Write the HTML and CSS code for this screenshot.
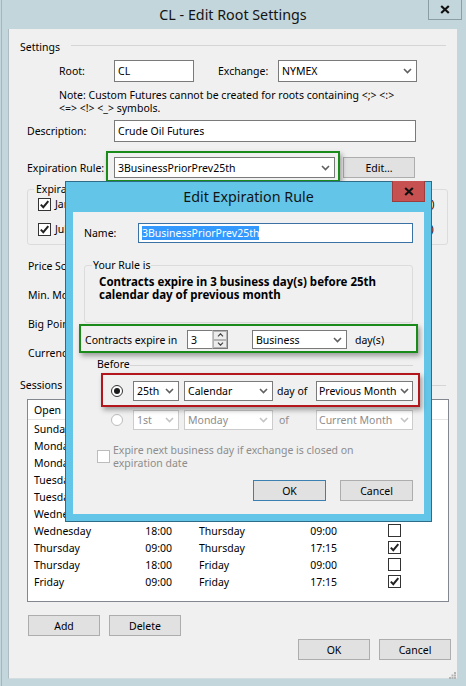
FILE: index.html
```html
<!DOCTYPE html>
<html>
<head>
<meta charset="utf-8">
<title>CL - Edit Root Settings</title>
<link rel="stylesheet" href="styles.css">
</head>
<body>
<div class="window">
  <div class="titlebar">
    <div></div>
    <div class="title">CL - Edit Root Settings</div>
    <div class="win-close"><svg width="10" height="9" viewBox="0 0 10 9"><path d="M1.2 1L8.8 8M8.8 1L1.2 8" stroke="#111" stroke-width="2.2"/></svg></div>
  </div>
  <div class="client">
    <div class="sec-head settings-head"><span>Settings</span><i class="rule"></i></div>
    <div class="row root-row">
      <span class="lbl lbl-root">Root:</span>
      <div class="field f-root">CL</div>
      <span class="lbl lbl-exch">Exchange:</span>
      <div class="field f-exch"><span>NYMEX</span><svg class="chev" width="9" height="6" viewBox="0 0 9 6"><path d="M1 1l3.5 3.5L8 1" fill="none" stroke="#606060" stroke-width="1.6"/></svg></div>
    </div>
    <p class="note">Note: Custom Futures cannot be created for roots containing &lt;;&gt; &lt;:&gt;<br>&lt;=&gt; &lt;!&gt; &lt;_&gt; symbols.</p>
    <div class="row desc-row">
      <span class="lbl lbl-wide">Description:</span>
      <div class="field f-desc">Crude Oil Futures</div>
    </div>
    <div class="row exp-row">
      <span class="lbl lbl-wide">Expiration Rule:</span>
      <div class="field f-rule"><span>3BusinessPriorPrev25th</span><svg class="chev" width="9" height="6" viewBox="0 0 9 6"><path d="M1 1l3.5 3.5L8 1" fill="none" stroke="#606060" stroke-width="1.6"/></svg></div>
      <div class="btn edit-btn">Edit...</div>
    </div>
    <div class="group months">
      <span class="group-label">Expiration Months</span>
      <div class="month-grid">
        <div class="cbx"><span class="box on"><svg width="11" height="11" viewBox="0 0 11 11"><path d="M1.8 5.6L4.3 8.2L9.3 2.2" fill="none" stroke="#222" stroke-width="2"/></svg></span><span>Jan (F)</span></div>
        <div class="cbx"><span class="box on"><svg width="11" height="11" viewBox="0 0 11 11"><path d="M1.8 5.6L4.3 8.2L9.3 2.2" fill="none" stroke="#222" stroke-width="2"/></svg></span><span>Feb (G)</span></div>
        <div class="cbx"><span class="box on"><svg width="11" height="11" viewBox="0 0 11 11"><path d="M1.8 5.6L4.3 8.2L9.3 2.2" fill="none" stroke="#222" stroke-width="2"/></svg></span><span>Mar (H)</span></div>
        <div class="cbx"><span class="box on"><svg width="11" height="11" viewBox="0 0 11 11"><path d="M1.8 5.6L4.3 8.2L9.3 2.2" fill="none" stroke="#222" stroke-width="2"/></svg></span><span>Apr (J)</span></div>
        <div class="cbx"><span class="box on"><svg width="11" height="11" viewBox="0 0 11 11"><path d="M1.8 5.6L4.3 8.2L9.3 2.2" fill="none" stroke="#222" stroke-width="2"/></svg></span><span>May (K)</span></div>
        <div class="cbx"><span class="box on"><svg width="11" height="11" viewBox="0 0 11 11"><path d="M1.8 5.6L4.3 8.2L9.3 2.2" fill="none" stroke="#222" stroke-width="2"/></svg></span><span>Jun (M)</span></div>
        <div class="cbx"><span class="box on"><svg width="11" height="11" viewBox="0 0 11 11"><path d="M1.8 5.6L4.3 8.2L9.3 2.2" fill="none" stroke="#222" stroke-width="2"/></svg></span><span>Jul (N)</span></div>
        <div class="cbx"><span class="box on"><svg width="11" height="11" viewBox="0 0 11 11"><path d="M1.8 5.6L4.3 8.2L9.3 2.2" fill="none" stroke="#222" stroke-width="2"/></svg></span><span>Aug (Q)</span></div>
        <div class="cbx"><span class="box on"><svg width="11" height="11" viewBox="0 0 11 11"><path d="M1.8 5.6L4.3 8.2L9.3 2.2" fill="none" stroke="#222" stroke-width="2"/></svg></span><span>Sep (U)</span></div>
        <div class="cbx"><span class="box on"><svg width="11" height="11" viewBox="0 0 11 11"><path d="M1.8 5.6L4.3 8.2L9.3 2.2" fill="none" stroke="#222" stroke-width="2"/></svg></span><span>Oct (V)</span></div>
        <div class="cbx"><span class="box on"><svg width="11" height="11" viewBox="0 0 11 11"><path d="M1.8 5.6L4.3 8.2L9.3 2.2" fill="none" stroke="#222" stroke-width="2"/></svg></span><span>Nov (X)</span></div>
        <div class="cbx"><span class="box on"><svg width="11" height="11" viewBox="0 0 11 11"><path d="M1.8 5.6L4.3 8.2L9.3 2.2" fill="none" stroke="#222" stroke-width="2"/></svg></span><span>Dec (Z)</span></div>
      </div>
    </div>
    <div class="prop">Price Scale:</div>
    <div class="prop">Min. Move:</div>
    <div class="prop">Big Point Value:</div>
    <div class="prop">Currency:</div>
    <div class="sec-head sessions-head"><span>Sessions</span><i class="rule"></i></div>
    <div class="list">
      <div class="list-head"><span>Open</span><span class="t">Time</span><span class="d2">Close</span><span class="t">Time</span><span class="cbcell">Sett.</span></div>
      <div class="list-row"><span>Sunday</span><span class="t">18:00</span><span class="d2">Monday</span><span class="t">09:00</span><span class="cbcell"><span class="box"></span></span></div>
      <div class="list-row"><span>Monday</span><span class="t">09:00</span><span class="d2">Monday</span><span class="t">17:15</span><span class="cbcell"><span class="box on"><svg width="11" height="11" viewBox="0 0 11 11"><path d="M1.8 5.6L4.3 8.2L9.3 2.2" fill="none" stroke="#222" stroke-width="2"/></svg></span></span></div>
      <div class="list-row"><span>Monday</span><span class="t">18:00</span><span class="d2">Tuesday</span><span class="t">09:00</span><span class="cbcell"><span class="box"></span></span></div>
      <div class="list-row"><span>Tuesday</span><span class="t">09:00</span><span class="d2">Tuesday</span><span class="t">17:15</span><span class="cbcell"><span class="box on"><svg width="11" height="11" viewBox="0 0 11 11"><path d="M1.8 5.6L4.3 8.2L9.3 2.2" fill="none" stroke="#222" stroke-width="2"/></svg></span></span></div>
      <div class="list-row"><span>Tuesday</span><span class="t">18:00</span><span class="d2">Wednesday</span><span class="t">09:00</span><span class="cbcell"><span class="box"></span></span></div>
      <div class="list-row"><span>Wednesday</span><span class="t">09:00</span><span class="d2">Wednesday</span><span class="t">17:15</span><span class="cbcell"><span class="box on"><svg width="11" height="11" viewBox="0 0 11 11"><path d="M1.8 5.6L4.3 8.2L9.3 2.2" fill="none" stroke="#222" stroke-width="2"/></svg></span></span></div>
      <div class="list-row"><span>Wednesday</span><span class="t">18:00</span><span class="d2">Thursday</span><span class="t">09:00</span><span class="cbcell"><span class="box"></span></span></div>
      <div class="list-row"><span>Thursday</span><span class="t">09:00</span><span class="d2">Thursday</span><span class="t">17:15</span><span class="cbcell"><span class="box on"><svg width="11" height="11" viewBox="0 0 11 11"><path d="M1.8 5.6L4.3 8.2L9.3 2.2" fill="none" stroke="#222" stroke-width="2"/></svg></span></span></div>
      <div class="list-row"><span>Thursday</span><span class="t">18:00</span><span class="d2">Friday</span><span class="t">09:00</span><span class="cbcell"><span class="box"></span></span></div>
      <div class="list-row"><span>Friday</span><span class="t">09:00</span><span class="d2">Friday</span><span class="t">17:15</span><span class="cbcell"><span class="box on"><svg width="11" height="11" viewBox="0 0 11 11"><path d="M1.8 5.6L4.3 8.2L9.3 2.2" fill="none" stroke="#222" stroke-width="2"/></svg></span></span></div>
    </div>
    <div class="btn-row">
      <div class="btn">Add</div>
      <div class="btn">Delete</div>
    </div>
    <div class="btn-row-right">
      <div class="btn">OK</div>
      <div class="btn">Cancel</div>
    </div>
    <svg class="grip" width="7" height="7" viewBox="0 0 7 7"><rect x="5" y="0" width="2" height="2" fill="#b4b4b4"/><rect x="2.5" y="2.5" width="2" height="2" fill="#b4b4b4"/><rect x="5" y="2.5" width="2" height="2" fill="#b4b4b4"/><rect x="0" y="5" width="2" height="2" fill="#b4b4b4"/><rect x="2.5" y="5" width="2" height="2" fill="#b4b4b4"/><rect x="5" y="5" width="2" height="2" fill="#b4b4b4"/></svg>
  </div>
</div>

<div class="mark mark-green1"></div>

<div class="dialog">
  <div class="dlg-title">
    <div></div>
    <div class="title">Edit Expiration Rule</div>
    <div class="dlg-close"><svg width="10" height="9" viewBox="0 0 10 9"><path d="M1.2 1L8.8 8M8.8 1L1.2 8" stroke="#111" stroke-width="2.2"/></svg></div>
  </div>
  <div class="dlg-body">
    <div class="row name-row">
      <span class="lbl lbl-name">Name:</span>
      <div class="field f-name"><span class="sel">3BusinessPriorPrev25th</span></div>
    </div>
    <div class="group rule-group">
      <span class="group-label">Your Rule is</span>
      <p class="rule-text">Contracts expire in 3 business day(s) before 25th<br>calendar day of previous month</p>
    </div>
    <div class="row contracts-row">
      <span class="lbl lbl-contracts">Contracts expire in</span>
      <div class="spin">
        <div class="spin-in">3</div>
        <div class="spin-btns">
          <span class="spin-b"><svg width="7" height="4" viewBox="0 0 7 4"><path d="M1 3.3L3.5 0.8L6 3.3" fill="none" stroke="#444" stroke-width="1.2"/></svg></span>
          <span class="spin-b"><svg width="7" height="4" viewBox="0 0 7 4"><path d="M1 0.7L3.5 3.2L6 0.7" fill="none" stroke="#444" stroke-width="1.2"/></svg></span>
        </div>
      </div>
      <div class="field f-biz"><span>Business</span><svg class="chev" width="9" height="6" viewBox="0 0 9 6"><path d="M1 1l3.5 3.5L8 1" fill="none" stroke="#606060" stroke-width="1.6"/></svg></div>
      <span class="days">day(s)</span>
    </div>
    <div class="before-head"><span>Before</span><i class="rule"></i></div>
    <div class="opt-row opt1">
      <span class="radio on"></span>
      <div class="field f-d1"><span>25th</span><svg class="chev" width="9" height="6" viewBox="0 0 9 6"><path d="M1 1l3.5 3.5L8 1" fill="none" stroke="#606060" stroke-width="1.6"/></svg></div>
      <div class="field f-d2"><span>Calendar</span><svg class="chev" width="9" height="6" viewBox="0 0 9 6"><path d="M1 1l3.5 3.5L8 1" fill="none" stroke="#606060" stroke-width="1.6"/></svg></div>
      <span class="ofword">day of</span>
      <div class="field f-d3"><span>Previous Month</span><svg class="chev" width="9" height="6" viewBox="0 0 9 6"><path d="M1 1l3.5 3.5L8 1" fill="none" stroke="#606060" stroke-width="1.6"/></svg></div>
    </div>
    <div class="opt-row opt2 disabled">
      <span class="radio"></span>
      <div class="field f-d1"><span>1st</span><svg class="chev" width="9" height="6" viewBox="0 0 9 6"><path d="M1 1l3.5 3.5L8 1" fill="none" stroke="#c4c4c4" stroke-width="1.6"/></svg></div>
      <div class="field f-d2"><span>Monday</span><svg class="chev" width="9" height="6" viewBox="0 0 9 6"><path d="M1 1l3.5 3.5L8 1" fill="none" stroke="#c4c4c4" stroke-width="1.6"/></svg></div>
      <span class="ofword of2">of</span>
      <div class="field f-d3"><span>Current Month</span><svg class="chev" width="9" height="6" viewBox="0 0 9 6"><path d="M1 1l3.5 3.5L8 1" fill="none" stroke="#c4c4c4" stroke-width="1.6"/></svg></div>
    </div>
    <div class="expire-row disabled">
      <span class="box"></span>
      <p class="expire-text">Expire next business day if exchange is closed on<br>expiration date</p>
    </div>
    <div class="dlg-btns">
      <div class="btn default">OK</div>
      <div class="btn">Cancel</div>
    </div>
  </div>
</div>

<div class="mark mark-green2"></div>
<div class="mark mark-red"></div>
</body>
</html>
```

FILE: styles.css
```css
* { box-sizing: border-box; margin: 0; padding: 0; }
html, body { width: 466px; height: 686px; overflow: hidden; }
body {
  position: relative;
  background: linear-gradient(to right, #c3d6dc 1px, #a6b7bc 1px, #a6b7bc 2px, #c3d6dc 2px);
  font-family: "Noto Sans", "Open Sans", sans-serif;
  font-size: 10.5px;
  line-height: 14px;
  color: #000;
}
.window { width: 466px; height: 686px; }
.titlebar { height: 29px; display: grid; grid-template-columns: 1fr auto 1fr; }
.title { font-size: 14.3px; line-height: 29px; color: #141414; white-space: nowrap; }
.win-close {
  justify-self: end; width: 34px; height: 20px; margin-right: 4px;
  border: 1px solid #8c9ea4; border-top: none;
  display: flex; align-items: center; justify-content: center;
}
.client {
  margin: 0 9px 0 8px; width: 449px; height: 650px; background: #f0f0f0; display: flow-root;
  border-left: 1px solid #aebcc1; border-bottom: 1px solid #d2dde1;
}
.sec-head { display: flex; height: 14px; padding: 0 11px; }
.sec-head .rule { flex: 1; height: 1px; background: #d5d5d5; margin: 5px 0 0 11px; }
.settings-head { margin-top: 11px; }
.sessions-head { margin-top: 17px; }
.sessions-head .rule { margin-top: 7px; }

.row { display: flex; align-items: center; }
.lbl { flex: none; white-space: nowrap; }
.field {
  flex: none; height: 22px; border: 1px solid #7a7a7a; background: #fff;
  padding: 0 4px 0 3px; display: flex; align-items: center; justify-content: space-between;
  white-space: nowrap; overflow: hidden;
}
.chev { flex: none; }
.root-row { height: 22px; margin-top: 6px; padding-left: 50px; }
.lbl-root { width: 55px; }
.f-root { width: 80px; }
.lbl-exch { width: 60px; margin-left: 24px; }
.f-exch { width: 139px; }
.note { margin-top: 7px; padding-left: 50px; line-height: 13px; }
.desc-row { height: 22px; margin-top: 5px; padding-left: 18px; }
.lbl-wide { width: 87px; }
.f-desc { width: 302px; }
.exp-row { height: 21px; margin-top: 15px; padding-left: 18px; }
.f-rule { width: 221px; height: 21px; }
.btn {
  flex: none; width: 72px; height: 21px; background: #e1e1e1; border: 1px solid #adadad;
  display: flex; align-items: center; justify-content: center;
}
.edit-btn { margin-left: 8px; }

.group { border: 1px solid #dcdcdc; border-radius: 3px; }
.group-label {
  display: block; width: fit-content; margin: -8px 0 0 6px; padding: 0 2px;
  background: #f0f0f0; line-height: 14px;
}
.months { margin: 11px 0 0 18px; width: 421px; height: 56px; }
.month-grid {
  display: grid; grid-template-columns: repeat(6, 69px); grid-auto-rows: 16px;
  row-gap: 9px; padding-left: 10px;
}
.cbx { display: flex; align-items: center; gap: 4px; white-space: nowrap; }
.box {
  flex: none; width: 13px; height: 13px; border: 1px solid #333; background: #fff;
  display: flex; align-items: center; justify-content: center;
}
.prop { height: 16px; line-height: 16px; padding-left: 19px; margin-top: 13px; }

.list {
  margin: 7px 0 0 18px; width: 422px; height: 203px;
  border: 1px solid #828790; background: #fff;
}
.list-head, .list-row {
  display: grid; grid-template-columns: 100px 38px 127px 38px 64px;
  padding-left: 6px; align-items: center; white-space: nowrap;
}
.list-head { height: 20px; border-bottom: 1px solid #e5e5e5; }
.list-row { height: 17px; }
.t { text-align: right; }
.d2 { padding-left: 27px; }
.cbcell { padding-left: 51px; display: flex; }
.btn-row { display: flex; gap: 9px; margin-top: 13px; padding-left: 19px; }
.btn-row-right { display: flex; gap: 9px; margin-top: 3px; justify-content: flex-end; padding-right: 6px; }
.grip { display: block; margin: 12px 1px 0 auto; }

/* dialog */
.dialog {
  position: absolute; left: 65px; top: 181px; width: 367px; height: 341px;
  background: #63c6e9; border: 1px solid #2f6c88; z-index: 2;
  display: flex; flex-direction: column;
}
.dlg-title { flex: none; height: 30px; display: grid; grid-template-columns: 1fr auto 1fr; }
.dlg-title .title { line-height: 30px; }
.dlg-close {
  justify-self: end; margin: -1px 6px 0 0; width: 33px; height: 21px;
  background: #c75050; border: 1px solid #9c3c3c; border-top: none;
  display: flex; align-items: center; justify-content: center;
}
.dlg-body { flex: 1; margin: 0 7px 7px 7px; background: #f0f0f0; display: flow-root; }
.name-row { height: 20px; margin-top: 11px; padding-left: 11px; }
.lbl-name { width: 54px; }
.f-name { width: 275px; height: 20px; border-color: #3a72a6; }
.sel { background: #3399ff; color: #fff; line-height: 14px; }
.rule-group { margin: 22px 0 0 11px; width: 329px; height: 58px; }
.rule-group .group-label { margin-left: 7px; padding: 0 1px; }
.rule-text { margin-top: 4px; padding-left: 14px; font-size: 11.5px; font-weight: 700; line-height: 12.5px; white-space: nowrap; }
.contracts-row { height: 19px; margin-top: 7px; padding-left: 12px; }
.lbl-contracts { width: 102px; }
.spin { flex: none; display: flex; height: 19px; }
.spin-in { width: 25px; height: 19px; border: 1px solid #7a7a7a; border-right: none; background: #fff; padding-left: 3px; display: flex; align-items: center; }
.spin-btns { width: 16px; height: 19px; display: flex; flex-direction: column; border: 1px solid #7a7a7a; border-left: 1px solid #c8c8c8; background: #fff; }
.spin-b { flex: 1; display: flex; align-items: center; justify-content: center; border: 1px solid #b4b4b4; background: #ececec; margin: 0; }
.f-biz { width: 95px; height: 19px; margin-left: 24px; }
.days { margin-left: 8px; }
.before-head { display: flex; width: 340px; height: 12px; margin-top: 9px; padding-left: 24px; line-height: 12px; }
.before-head .rule { width: 286px; height: 1px; background: #d5d5d5; margin: 7px 0 0 auto; }
.opt-row {
  display: grid; grid-template-columns: 22px 51px 93px 39px 97px;
  height: 20px; align-items: center; padding-left: 38px; white-space: nowrap;
}
.opt1 { margin-top: 11px; }
.opt2 { margin-top: 9px; }
.opt-row .field { height: 20px; }
.f-d1 { width: 46px; }
.f-d2 { width: 89px; }
.f-d3 { width: 97px; padding-left: 2px; padding-right: 3px; }
.of2 { padding-left: 2px; }
.radio {
  width: 12px; height: 12px; border-radius: 50%; border: 1px solid #333; background: #fff;
  display: flex; align-items: center; justify-content: center;
}
.radio.on::after { content: ""; width: 6px; height: 6px; border-radius: 50%; background: #1a1a1a; }
.disabled { color: #8d8d8d; }
.disabled .field { border-color: #cccccc; }
.disabled .radio { border-color: #bcbcbc; }
.expire-row { display: flex; margin-top: 14px; padding-left: 24px; line-height: 13px; }
.expire-row .box { margin-top: 6px; border-color: #bcbcbc; }
.expire-text { margin-left: 3px; white-space: nowrap; }
.dlg-btns { display: flex; justify-content: flex-end; gap: 14px; margin-top: 10px; padding-right: 11px; }
.dlg-btns .btn { width: 73px; }
.btn.default { border-color: #3c7fb1; }

/* annotation frames */
.mark { position: absolute; border: 2px solid #1a8a1a; box-shadow: 2px 3px 5px rgba(0,0,0,0.35); }
.mark-green1 { left: 106px; top: 151px; width: 234px; height: 31px; z-index: 1; }
.mark-green2 { left: 79px; top: 324px; width: 339px; height: 29px; z-index: 3; }
.mark-red { left: 101px; top: 373px; width: 319px; height: 34px; border-color: #b3161c; z-index: 3; }
```
